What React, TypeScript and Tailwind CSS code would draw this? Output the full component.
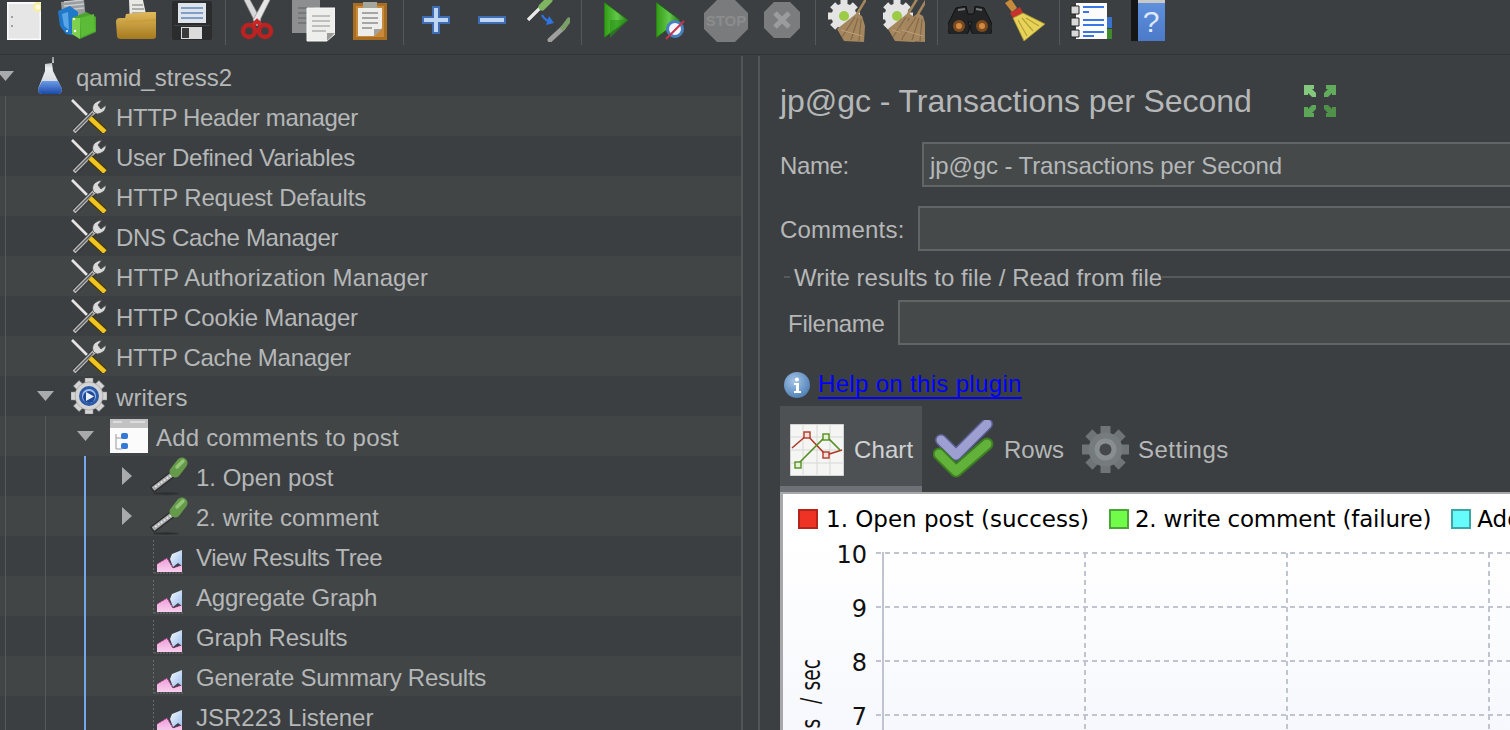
import React from "react";

const FONT = "font-['Liberation_Sans',Arial,sans-serif]";

function Defs() {
  return (
    <svg width="0" height="0" className="absolute">
      <defs>
        <linearGradient id="flaskBlue" x1="0" y1="0" x2="0" y2="1"><stop offset="0" stopColor="#6b9be8" /><stop offset="1" stopColor="#1b49a8" /></linearGradient>
        <linearGradient id="flaskGlass" x1="0" y1="0" x2="0" y2="1"><stop offset="0" stopColor="#8f9396" /><stop offset="0.3" stopColor="#eceef0" /><stop offset="1" stopColor="#c4cbd4" /></linearGradient>
        <linearGradient id="playG" x1="0" y1="0" x2="1" y2="0"><stop offset="0" stopColor="#2f9a14" /><stop offset="0.55" stopColor="#63c84a" /><stop offset="1" stopColor="#2a7a18" /></linearGradient>
        <linearGradient id="folder" x1="0" y1="0" x2="0" y2="1"><stop offset="0" stopColor="#e0b95c" /><stop offset="1" stopColor="#a67a1e" /></linearGradient>
        <linearGradient id="graphPink" x1="0" y1="0" x2="0" y2="1"><stop offset="0" stopColor="#ee9ed9" /><stop offset="1" stopColor="#f8cfee" /></linearGradient>
        <linearGradient id="graphBlue" x1="0" y1="0" x2="1" y2="1"><stop offset="0" stopColor="#f4f8ff" /><stop offset="1" stopColor="#9fc0ee" /></linearGradient>
        <radialGradient id="infoG" cx="0.4" cy="0.35" r="0.8"><stop offset="0" stopColor="#a6c4e6" /><stop offset="1" stopColor="#3f74ad" /></radialGradient>
        <linearGradient id="helpG" x1="0" y1="0" x2="0" y2="1"><stop offset="0" stopColor="#5f90dc" /><stop offset="1" stopColor="#4b7ac8" /></linearGradient>
        <linearGradient id="chartBg" x1="0" y1="0" x2="0" y2="1"><stop offset="0" stopColor="#ffffff" /><stop offset="1" stopColor="#f7f8fd" /></linearGradient>
      </defs>
    </svg>
  );
}

const Sep = ({ className }: { className: string }) => <div className={`h-[45px] w-px shrink-0 bg-[#555759] ${className}`} />;

const Broom = ({ x = 0 }: { x?: number }) => (
  <g transform={`translate(${x} 0)`}>
    <path d="M38 -1 L29 14" stroke="#a4875e" strokeWidth="2.5" />
    <path d="M29 13 L9 29 L16 41 L36 42 L37 26 L34 16 Z" fill="#a4875e" />
    <path d="M27 17 L14 37 M30 18 L23 40 M33 19 L31 41" stroke="#84694a" strokeWidth="1.2" />
    <path d="M13 30 L34 36" stroke="#bda07a" strokeWidth="1" />
  </g>
);

const GearSmall = ({ cx = 18 }: { cx?: number }) => (
  <g>
    <g fill="#e4e4e4">
      {[0, 45, 90, 135, 180, 225, 270, 315].map((a) => (
        <rect key={a} x={cx - 3.5} y="0" width="7" height="6" transform={`rotate(${a} ${cx} 16)`} />
      ))}
      <circle cx={cx} cy="16" r="12.5" />
    </g>
    <circle cx={cx} cy="16" r="5" fill="#9ccb45" />
  </g>
);

function Toolbar() {
  return (
    <div className="flex h-[55px] shrink-0 items-start overflow-hidden border-b border-[#323436] bg-[#3c3f41]">
      {/* new */}
      <svg width="34" height="38" viewBox="0 0 34 38" className="ml-[7px] mt-[2px] shrink-0">
        <rect x="0.5" y="1" width="33" height="36.5" fill="#e6e6e6" stroke="#fbfbfb" strokeWidth="2" />
        <circle cx="5" cy="15" r="1" fill="#888" /><circle cx="5" cy="24" r="1" fill="#888" />
        <circle cx="31" cy="5" r="5" fill="#f7efa0" />
        <circle cx="31" cy="5" r="2.5" fill="#fffbe0" />
      </svg>
      {/* templates */}
      <svg width="39" height="40" viewBox="0 0 39 40" className="ml-[17px] shrink-0">
        <path d="M3 2 L26 0 L28 20 L5 24 Z" fill="#9a9da0" />
        <path d="M6 2 L25 0 M6 6 L26 4 M7 10 L26 8" stroke="#c9cbcd" strokeWidth="1.5" />
        <path d="M0 11 L12 6 L20 12 L20 36 L8 34 L2 26 Z" fill="#1f78c9" />
        <path d="M4 14 L10 12 L11 30 L6 26 Z" fill="#58a6e6" />
        <circle cx="9" cy="31" r="1" fill="#fff" />
        <path d="M14 18 L28 12 L38 17 L38 32 L22 39 L14 34 Z" fill="#4ba42c" />
        <path d="M22 18 L36 14 L37 31 L23 37 Z" fill="#5cbc38" />
        <path d="M14 18 L22 18 L22 39 L14 34 Z" fill="#7ed04e" />
        <circle cx="16" cy="19" r="1.2" fill="#eaf7de" /><circle cx="17" cy="31" r="1.2" fill="#fff" />
      </svg>
      {/* open */}
      <svg width="40" height="40" viewBox="0 0 40 40" className="ml-[19px] shrink-0">
        <path d="M13 0 L27 0 L32 24 L14 24 Z" fill="#e9e9e6" />
        <path d="M16 5 L27 5 M16 9 L28 9 M16 13 L29 13 M17 17 L29 17" stroke="#9c9c98" strokeWidth="1.5" />
        <path d="M0 22 Q0 18 4 18 L9 18 L10 14 L32 12 L40 12 L40 36 Q40 39 37 39 L5 39 Q1 39 1 36 Z" fill="url(#folder)" />
        <path d="M9 22 L40 20" stroke="#c99d3a" strokeWidth="2" />
      </svg>
      {/* save */}
      <svg width="40" height="39" viewBox="0 0 40 39" className="ml-[16px] mt-px shrink-0">
        <rect x="0" y="0" width="40" height="39" rx="2" fill="#2a2c2e" />
        <rect x="6" y="2" width="28" height="20" fill="#dfe4ea" />
        <path d="M9 7 H31 M9 12 H31 M9 17 H31" stroke="#7f9fcb" strokeWidth="2" />
        <rect x="9" y="26" width="21" height="12" fill="#dcdcdc" />
        <rect x="10" y="27" width="7" height="10" fill="#3a3a3a" />
        <rect x="2" y="24" width="36" height="1" fill="#444" />
      </svg>
      <Sep className="ml-[13px]" />
      {/* cut */}
      <svg width="34" height="40" viewBox="0 0 34 40" className="ml-[14px] shrink-0">
        <path d="M3 -2 L9 -2 L21 20 L17 26 Z" fill="#d8d8d8" stroke="#888" strokeWidth="0.6" />
        <path d="M31 -2 L25 -2 L13 20 L17 26 Z" fill="#e6e6e6" stroke="#888" strokeWidth="0.6" />
        <circle cx="9" cy="31" r="6" fill="none" stroke="#bd2222" strokeWidth="4.5" />
        <circle cx="25" cy="31" r="6" fill="none" stroke="#bd2222" strokeWidth="4.5" />
        <path d="M13 25 L17 21 L21 25" stroke="#c92828" strokeWidth="4" fill="none" />
      </svg>
      {/* copy */}
      <svg width="43" height="42" viewBox="0 0 43 42" className="ml-[18px] shrink-0">
        <rect x="0" y="0" width="28" height="33" fill="#8c8e90" />
        <path d="M6 8 H22 M6 13 H22 M6 18 H22 M6 23 H22" stroke="#6e7072" strokeWidth="1.5" />
        <path d="M15 8 H43 V34 L35 41 H15 Z" fill="#eeeeec" stroke="#f8f8f8" />
        <path d="M20 16 H38 M20 21 H38 M20 26 H38 M20 31 H34" stroke="#b0b0ae" strokeWidth="1.5" />
        <path d="M35 41 L35 33 L43 33 Z" fill="#9a9a98" />
      </svg>
      {/* paste */}
      <svg width="34" height="38" viewBox="0 0 34 38" className="ml-[18px] mt-[2px] shrink-0">
        <rect x="0" y="1" width="34" height="37" fill="#a86e22" />
        <rect x="3" y="4" width="28" height="31" fill="#c9893a" />
        <path d="M5 6 H29 V26 L21 34 H5 Z" fill="#ededeb" />
        <path d="M9 11 H25 M9 16 H25 M9 21 H25 M9 26 H19" stroke="#8e8e8c" strokeWidth="1.6" />
        <path d="M21 34 L21 27 L29 27 Z" fill="#a0a09e" />
        <path d="M10 -2 H24 V6 H10 Z" fill="#a5a69c" />
      </svg>
      <Sep className="ml-[16px]" />
      {/* plus */}
      <svg width="28" height="28" viewBox="0 0 28 28" className="ml-[18px] mt-[6px] shrink-0">
        <path d="M11 1 H17 V11 H27 V17 H17 V27 H11 V17 H1 V11 H11 Z" fill="#bfd6f2" stroke="#3f6db4" strokeWidth="2" />
      </svg>
      {/* minus */}
      <svg width="28" height="8" viewBox="0 0 28 8" className="ml-[28px] mt-[16px] shrink-0">
        <rect x="1" y="1" width="26" height="6" fill="#bfd6f2" stroke="#3f6db4" strokeWidth="2" />
      </svg>
      {/* toggle */}
      <svg width="43" height="42" viewBox="0 0 43 42" className="ml-[21px] shrink-0">
        <path d="M1 20 L14 7" stroke="#333" strokeWidth="5" />
        <path d="M1 20 L14 7" stroke="#e8e8e8" strokeWidth="3.4" />
        <path d="M15 7 L22 0" stroke="#7fb560" strokeWidth="7" strokeLinecap="round" />
        <path d="M15 15 Q18 21 25 22" stroke="#2f74e0" strokeWidth="2.2" fill="none" />
        <path d="M22 16 L27 23 L19 25 Z" fill="#2f74e0" />
        <path d="M23 40 L36 28" stroke="#b8b8b6" strokeWidth="5" strokeLinecap="round" opacity="0.8" />
        <path d="M36 28 L42 20" stroke="#7c9f68" strokeWidth="5" strokeLinecap="round" />
      </svg>
      <Sep className="ml-[11px]" />
      {/* run */}
      <svg width="24" height="36" viewBox="0 0 24 36" className="ml-[22px] mt-[2px] shrink-0">
        <path d="M0 0 L24 18 L0 36 Z" fill="url(#playG)" stroke="#23661a" strokeWidth="1" />
        <path d="M6 18 L24 18 L6 36 Z" fill="#279216" opacity="0.6" />
      </svg>
      {/* run no timers */}
      <svg width="30" height="38" viewBox="0 0 30 38" className="ml-[28px] mt-[2px] shrink-0">
        <path d="M0 0 L24 18 L0 36 Z" fill="url(#playG)" stroke="#23661a" strokeWidth="1" />
        <circle cx="19" cy="27" r="7.5" fill="#f2f6fb" stroke="#4a7fc0" strokeWidth="3" />
        <path d="M10 37 L28 19" stroke="#c8344a" strokeWidth="2" />
      </svg>
      {/* stop */}
      <svg width="44" height="42" viewBox="0 0 44 42" className="ml-[18px] shrink-0">
        <path d="M13 0 H31 L44 13 V29 L31 42 H13 L0 29 V13 Z" fill="#7a7b7c" />
        <text x="22" y="26" textAnchor="middle" fontSize="15" fontWeight="700" fill="#8b8c8d" fontFamily="Liberation Sans">STOP</text>
      </svg>
      {/* shutdown */}
      <svg width="36" height="36" viewBox="0 0 36 36" className="ml-[16px] mt-[2px] shrink-0">
        <path d="M10 0 H26 L36 10 V26 L26 36 H10 L0 26 V10 Z" fill="#7b7c7d" />
        <path d="M11 11 L25 25 M25 11 L11 25" stroke="#9b9c9d" strokeWidth="5" />
      </svg>
      <Sep className="ml-[15px]" />
      {/* clear */}
      <svg width="40" height="42" viewBox="0 0 40 42" className="ml-[10px] shrink-0">
        <GearSmall cx={18} />
        <Broom x={2} />
      </svg>
      {/* clear all */}
      <svg width="42" height="42" viewBox="0 0 42 42" className="ml-[17px] shrink-0">
        <GearSmall cx={14} />
        <Broom x={-4} />
        <Broom x={6} />
      </svg>
      <Sep className="ml-[12px]" />
      {/* binoculars */}
      <svg width="44" height="28" viewBox="0 0 44 28" className="ml-[10px] mt-[6px] shrink-0">
        <path d="M8 2 L18 0 L20 8 L26 8 L27 0 L36 2 L44 18 A11 11 0 1 1 24 16 L20 16 A11 11 0 1 1 0 18 Z" fill="#232426" stroke="#111" />
        <circle cx="11" cy="20" r="6" fill="#7c4a1c" /><circle cx="11" cy="20" r="3" fill="#d08a44" />
        <circle cx="34" cy="20" r="6" fill="#7c4a1c" /><circle cx="34" cy="20" r="3" fill="#d08a44" />
        <path d="M10 4 L17 3 M28 3 L34 4" stroke="#777" strokeWidth="2" />
      </svg>
      {/* broom */}
      <svg width="43" height="42" viewBox="0 0 43 42" className="ml-[11px] shrink-0">
        <path d="M2 3 L8 -1 L14 8 L9 12 Z" fill="#c58a3c" />
        <path d="M7 13 L17 7 L20 13 L10 18 Z" fill="#c8322e" />
        <path d="M10 18 L20 13 L42 24 L21 41 Z" fill="#e7d25a" stroke="#a8962e" strokeWidth="0.8" />
        <path d="M15 20 L24 36 M19 18 L30 31 M23 18 L36 26" stroke="#b8a232" strokeWidth="1.2" />
      </svg>
      <Sep className="ml-[13px]" />
      {/* function helper */}
      <svg width="42" height="38" viewBox="0 0 42 38" className="ml-[10px] mt-px shrink-0">
        <rect x="33" y="16" width="9" height="11" fill="#3a72d0" /><rect x="33" y="28" width="9" height="10" fill="#3f8a2a" />
        <rect x="6" y="2" width="31" height="37" fill="#fbfbfb" />
        <path d="M1 5 H9 V13 H1 Z M1 17 H9 V25 H1 Z M1 29 H9 V36 H1 Z" fill="#d8d8d8" stroke="#222" strokeWidth="1" />
        <path d="M13 6 H34 M13 11 H19 M13 19 H34 M13 24 H34 M13 31 H34 M13 35 H24" stroke="#3a76e4" strokeWidth="2" />
      </svg>
      {/* help */}
      <svg width="34" height="41" viewBox="0 0 34 41" className="ml-[19px] shrink-0">
        <rect x="0" y="0" width="7" height="41" fill="#151617" />
        <rect x="7" y="0" width="27" height="4" fill="#c8c8c8" />
        <rect x="7" y="3" width="27" height="38" fill="url(#helpG)" />
        <text x="20" y="32" textAnchor="middle" fontSize="30" fill="#dfe9fa" fontFamily="Liberation Sans">?</text>
      </svg>
    </div>
  );
}

const DownArrow = ({ className }: { className: string }) => (
  <svg width="17" height="10" viewBox="0 0 17 10" className={`shrink-0 ${className}`}><path d="M0 0 H17 L8.5 10 Z" fill="#a8aaab" /></svg>
);
const RightArrow = () => (
  <svg width="10" height="18" viewBox="0 0 10 18" className="shrink-0"><path d="M0 0 L10 9 L0 18 Z" fill="#a8aaab" /></svg>
);

const Flask = () => (
  <svg width="24" height="38" viewBox="0 0 24 38" className="shrink-0">
    <path d="M14 0 L16 0 L16 6 L14 6 L15 14 L24 32 Q24 37 20 37 L4 37 Q0 37 0 32 L7 14 L7 7 L14 6 Z" fill="url(#flaskGlass)" />
    <path d="M4 24 L20 24 L24 32 Q24 37 20 37 L4 37 Q0 37 0 32 Z" fill="url(#flaskBlue)" />
  </svg>
);

const Tools = () => (
  <svg width="36" height="34" viewBox="0 0 36 34" className="shrink-0">
    <path d="M1 1 L19 19" stroke="#e4e4e4" strokeWidth="2.6" />
    <path d="M3 33 L24 12" stroke="#2e2f30" strokeWidth="6" />
    <path d="M3 33 L24 12" stroke="#b9b9b9" strokeWidth="4" />
    <path d="M4 32 L22 14" stroke="#55585a" strokeWidth="1.4" />
    <path d="M19 19 L34 33" stroke="#4a3800" strokeWidth="7" />
    <path d="M19 19 L34 33" stroke="#eec522" strokeWidth="4.6" />
    <path d="M22 12 Q20 5 27 2 L31 1 L27 6 L30 10 L35 6 Q35 12 30 14 Q26 16 24 14 Z" fill="#dadada" stroke="#4a4a4a" strokeWidth="0.8" />
  </svg>
);

const Gear = () => (
  <svg width="36" height="36" viewBox="0 0 36 36" className="shrink-0">
    <g fill="#d4d4d4" stroke="#8a8a8a" strokeWidth="0.5">
      {[0, 45, 90, 135, 180, 225, 270, 315].map((a) => (
        <rect key={a} x="14" y="0" width="8" height="8" transform={`rotate(${a} 18 18)`} />
      ))}
      <circle cx="18" cy="18" r="14" />
    </g>
    <circle cx="18" cy="18" r="10" fill="#2c5aa6" />
    <circle cx="18" cy="18" r="7" fill="#9fc0ea" />
    <circle cx="18" cy="19" r="6" fill="#1f4896" />
    <path d="M15 14 L23 18.5 L15 23 Z" fill="#e9f0fb" />
  </svg>
);

const TxIcon = () => (
  <svg width="38" height="34" viewBox="0 0 38 34" className="shrink-0">
    <rect width="38" height="34" fill="#fbfbfb" />
    <rect width="38" height="9" fill="#c2c2c2" />
    <path d="M3 3 H12 M20 3 H35" stroke="#dcdcdc" strokeWidth="2" />
    <path d="M6 15 V30 H12 M6 19 H12" stroke="#999" fill="none" strokeWidth="1" />
    <rect x="11" y="14" width="7" height="6" rx="2" fill="#3478d8" />
    <rect x="11" y="24" width="7" height="6" rx="2" fill="#3478d8" />
  </svg>
);

const Dropper = () => (
  <svg width="38" height="38" viewBox="0 0 38 38" className="shrink-0">
    <ellipse cx="16" cy="36.5" rx="13" ry="1.2" fill="#2d2e2f" />
    <path d="M2 33 L24 16" stroke="#2b2c2d" strokeWidth="7" />
    <path d="M3 32 L24 16" stroke="#a9abac" strokeWidth="4.6" />
    <path d="M5 30 L23 17" stroke="#f2f2f2" strokeWidth="1.5" strokeDasharray="2 1.6" />
    <path d="M25 15 L32 6" stroke="#659a4b" strokeWidth="11" strokeLinecap="round" />
    <path d="M27 10 L33 4" stroke="#93c676" strokeWidth="3.5" strokeLinecap="round" />
  </svg>
);

const Listener = () => (
  <svg width="31" height="35" viewBox="0 0 31 35" className="shrink-0">
    <path d="M0.5 1 V34" stroke="#6b6c6d" strokeDasharray="2 2" />
    <path d="M1 34 H31" stroke="#6f7071" strokeDasharray="2 1" />
    <path d="M4 33 V25 L14 19 L20 29 L29 26 V33 Z" fill="url(#graphPink)" />
    <path d="M4 25 L14 19 L20 29 L29 26" fill="none" stroke="#8b2a72" strokeWidth="1" strokeDasharray="2 1" />
    <path d="M17 20 L19 15 L24 13 L29 11 L29 27 L25 24 L20 28 Z" fill="url(#graphBlue)" />
  </svg>
);

function Row({ light, className, children }: { light?: boolean; className: string; children: React.ReactNode }) {
  return (
    <div className={`flex h-10 shrink-0 items-center whitespace-nowrap ${light ? "bg-[#414546]" : ""} ${className}`}>{children}</div>
  );
}

function Tree() {
  const tools = [
    ["HTTP Header manager", "tracking-[-0.37px]"],
    ["User Defined Variables", "tracking-[-0.27px]"],
    ["HTTP Request Defaults", "tracking-[-0.14px]"],
    ["DNS Cache Manager", "tracking-[-0.35px]"],
    ["HTTP Authorization Manager", "tracking-[0.12px]"],
    ["HTTP Cookie Manager", "tracking-[-0.16px]"],
    ["HTTP Cache Manager", "tracking-[-0.28px]"],
  ];
  const listeners = [
    ["View Results Tree", "tracking-[-0.4px]"],
    ["Aggregate Graph", "tracking-[-0.2px]"],
    ["Graph Results", "tracking-[-0.15px]"],
    ["Generate Summary Results", "tracking-[-0.25px]"],
    ["JSR223 Listener", "tracking-[0px]"],
  ];
  return (
    <div className="relative w-[741px] shrink-0 overflow-hidden text-[24px] text-[#b5b7b8]">
      <Row className="">
        <DownArrow className="-ml-[3px]" />
        <div className="ml-[24px]"><Flask /></div>
        <span className="ml-[14px] pt-1">qamid_stress2</span>
      </Row>
      {tools.map(([t, tr], i) => (
        <Row key={t} light={i % 2 === 0} className="pl-[71px]">
          <Tools />
          <span className={`ml-[9px] pt-1 ${tr}`}>{t}</span>
        </Row>
      ))}
      <Row className="pl-[37px]">
        <DownArrow className="" />
        <div className="ml-[17px]"><Gear /></div>
        <span className="ml-[9px] pt-1 tracking-[0.14px]">writers</span>
      </Row>
      <Row light className="pl-[77px]">
        <DownArrow className="" />
        <div className="ml-[16px]"><TxIcon /></div>
        <span className="ml-[8px] pt-1 tracking-[0.2px]">Add comments to post</span>
      </Row>
      <Row className="pl-[122px]">
        <RightArrow />
        <div className="ml-[18px]"><Dropper /></div>
        <span className="ml-[8px] pt-1">1. Open post</span>
      </Row>
      <Row light className="pl-[122px]">
        <RightArrow />
        <div className="ml-[18px]"><Dropper /></div>
        <span className="ml-[8px] pt-1">2. write comment</span>
      </Row>
      {listeners.map(([t, tr], i) => (
        <Row key={t} light={i % 2 === 1} className="pl-[153px]">
          <Listener />
          <span className={`ml-[12px] pt-1 ${tr}`}>{t}</span>
        </Row>
      ))}
      <div className="absolute bottom-0 left-[5px] top-[40px] w-px bg-[#565859]" />
      <div className="absolute bottom-0 left-[45px] top-[360px] w-px bg-[#565859]" />
      <div className="absolute bottom-0 left-[84px] top-[400px] w-[2px] bg-[#74a9ee]" />
    </div>
  );
}

const Expand = () => (
  <svg width="32" height="32" viewBox="0 0 32 32" className="ml-[52px] shrink-0">
    <path d="M0 0 H10 V4 H8 L12 8 V12 H8 L4 8 V10 H0 Z" fill="#83c87c" />
    <path d="M32 0 H22 V4 H24 L20 8 V12 H24 L28 8 V10 H32 Z" fill="#62aa5c" />
    <path d="M0 32 H10 V28 H8 L12 24 V20 H8 L4 24 V22 H0 Z" fill="#5ca757" />
    <path d="M32 32 H22 V28 H24 L20 24 V20 H24 L28 24 V22 H32 Z" fill="#4f9149" />
  </svg>
);

const inputCls = "h-[45px] flex-1 border-2 border-r-0 border-[#626465] bg-[#45494a] px-[6px] leading-[43px]";

function Chart() {
  const ys = [553, 607, 661, 715];
  return (
    <div className="flex-1 overflow-hidden border-l-[3px] border-t-2 border-[#a6a8aa] bg-white text-black">
      <div className="flex h-[48px] items-center whitespace-nowrap pl-[15px] pt-[2px] font-['DejaVu_Sans',sans-serif] text-[23px]">
        <span className="h-[20px] w-[20px] shrink-0 border-2 border-[#b3241a] bg-[#ee3324]" />
        <span className="ml-[8px]">1. Open post (success)</span>
        <span className="ml-[20px] h-[20px] w-[20px] shrink-0 border-2 border-[#4aa636] bg-[#72fc4a]" />
        <span className="ml-[6px] tracking-[-0.2px]">2. write comment (failure)</span>
        <span className="ml-[20px] h-[20px] w-[20px] shrink-0 border-2 border-[#3ea6a6] bg-[#66fcfc]" />
        <span className="ml-[6px]">Add comments to post</span>
      </div>
      <svg width="727" height="188" viewBox="783 542 727 188" className="block">
        <rect x="783" y="542" width="727" height="188" fill="url(#chartBg)" />
        {ys.map((y) => (
          <path key={y} d={`M876 ${y}H1510`} stroke="#c0c4cf" strokeWidth="2" strokeDasharray="5 4" />
        ))}
        {[1085, 1287, 1489].map((x) => (
          <path key={x} d={`M${x} 553V730`} stroke="#c0c4cf" strokeWidth="2" strokeDasharray="5 4" />
        ))}
        <path d="M883 552V730" stroke="#bfc4d0" strokeWidth="2" />
        <g fontFamily="DejaVu Sans" fontSize="24" fill="#111" textAnchor="end">
          <text x="867" y="563">10</text>
          <text x="867" y="617">9</text>
          <text x="867" y="671">8</text>
          <text x="867" y="725">7</text>
        </g>
        <text transform="translate(820 659) rotate(-90) scale(0.72 1)" fontFamily="DejaVu Sans" fontSize="26" fill="#111" textAnchor="end">
          transactions <tspan dx="12">/</tspan><tspan dx="10">sec</tspan>
        </text>
      </svg>
    </div>
  );
}

function Panel() {
  return (
    <div className="flex min-w-0 flex-1 flex-col overflow-hidden pl-5 text-[24px] text-[#b5b7b8]">
      <div className="flex h-[86px] shrink-0 items-center pt-1 text-[32px]">
        <span className="whitespace-nowrap tracking-[-0.06px]">jp@gc - Transactions per Second</span>
        <Expand />
      </div>
      <div className="flex shrink-0 items-center">
        <span className="w-[142px] shrink-0 pt-[2px] tracking-[-0.4px]">Name:</span>
        <div className={`${inputCls} tracking-[-0.1px]`}>jp@gc - Transactions per Second</div>
      </div>
      <div className="mt-[19px] flex shrink-0 items-center">
        <span className="w-[138px] shrink-0 pt-[2px] tracking-[0.2px]">Comments:</span>
        <div className={inputCls} />
      </div>
      <div className="relative ml-[4px] mt-[25px] flex h-[2px] shrink-0 bg-[#58595b]">
        <span className="absolute left-[6px] top-[-12px] bg-[#3c3f41] pl-[4px] leading-[28px] whitespace-nowrap tracking-[0.05px]">Write results to file / Read from file</span>
      </div>
      <div className="mt-[22px] flex shrink-0 items-center pl-2">
        <span className="w-[110px] shrink-0 pt-[2px] tracking-[-0.25px]">Filename</span>
        <div className={inputCls} />
      </div>
      <div className="mt-[25px] flex h-[30px] shrink-0 items-center pl-1">
        <svg width="26" height="26" viewBox="0 0 26 26" className="shrink-0">
          <circle cx="13" cy="13" r="13" fill="url(#infoG)" />
          <circle cx="13" cy="7.5" r="2" fill="#fff" />
          <path d="M10 11 H15 V19 H17 V21 H10 V19 H12 V13 H10 Z" fill="#fff" />
        </svg>
        <a className="ml-2 border-b-2 border-[#0000ff] leading-[26px] tracking-[0.33px] text-[#0000ff]">Help on this plugin</a>
      </div>
      <div className="mt-[6px] flex h-[86px] shrink-0 items-stretch">
        <div className="flex w-[142px] items-center border-b-[6px] border-[#6e7276] bg-[#4d5153] pl-[10px] pt-[7px] text-[#d0d2d3]">
          <svg width="54" height="52" viewBox="0 0 54 52" className="shrink-0">
            <rect width="54" height="52" fill="#f5f5f3" stroke="#b0b0b0" />
            <path d="M0 13H54M0 26H54M0 39H54M13 0V52M27 0V52M40 0V52" stroke="#d8d8d6" strokeWidth="1" />
            <path d="M2 24 L17 11 L36 31 L52 26" fill="none" stroke="#b0392a" strokeWidth="1.6" />
            <path d="M8 40 L36 12 L50 26" fill="none" stroke="#568f24" strokeWidth="1.6" />
            <rect x="14" y="8" width="6" height="6" fill="#f5dfd8" stroke="#b0392a" strokeWidth="1.4" />
            <rect x="33" y="28" width="6" height="6" fill="#f5dfd8" stroke="#b0392a" strokeWidth="1.4" />
            <rect x="33" y="10" width="6" height="6" fill="#e6f2d4" stroke="#568f24" strokeWidth="1.4" />
            <rect x="5" y="38" width="6" height="6" fill="#e6f2d4" stroke="#568f24" strokeWidth="1.4" />
          </svg>
          <span className="ml-[10px] tracking-[0.1px]">Chart</span>
        </div>
        <div className="flex items-center pt-px">
          <svg width="62" height="60" viewBox="0 0 62 60" className="ml-[11px] shrink-0">
            <path d="M8 18 L23 33 L54 2" fill="none" stroke="#5a5f93" strokeWidth="12" strokeLinecap="round" strokeLinejoin="round" transform="translate(0 2)" />
            <path d="M8 18 L23 33 L54 2" fill="none" stroke="#9d9fd0" strokeWidth="9" strokeLinecap="round" strokeLinejoin="round" transform="translate(0 2)" />
            <path d="M6 34 L23 51 L54 24" fill="none" stroke="#3d7d23" strokeWidth="13" strokeLinecap="round" strokeLinejoin="round" />
            <path d="M6 34 L23 51 L54 24" fill="none" stroke="#62b13a" strokeWidth="9" strokeLinecap="round" strokeLinejoin="round" />
          </svg>
          <span className="ml-[9px]">Rows</span>
          <svg width="47" height="47" viewBox="0 0 47 47" className="ml-[18px] shrink-0">
            <g fill="#6f7476">
              {[0, 45, 90, 135, 180, 225, 270, 315].map((a) => (
                <rect key={a} x="18.5" y="0" width="10" height="10" transform={`rotate(${a} 23.5 23.5)`} />
              ))}
            </g>
            <circle cx="23.5" cy="23.5" r="17" fill="#767b7d" />
            <circle cx="23.5" cy="23.5" r="11" fill="#898e90" />
            <circle cx="23.5" cy="23.5" r="6" fill="#45484a" />
          </svg>
          <span className="ml-[9px] tracking-[0.5px]">Settings</span>
        </div>
      </div>
      <Chart />
    </div>
  );
}

export default function App() {
  return (
    <div className={`flex h-[730px] w-[1510px] flex-col overflow-hidden bg-[#3c3f41] ${FONT}`}>
      <Defs />
      <Toolbar />
      <div className="flex min-h-0 flex-1 pt-px">
        <Tree />
        <div className="w-[19px] shrink-0 border-x-2 border-[#525455]" />
        <Panel />
      </div>
    </div>
  );
}
